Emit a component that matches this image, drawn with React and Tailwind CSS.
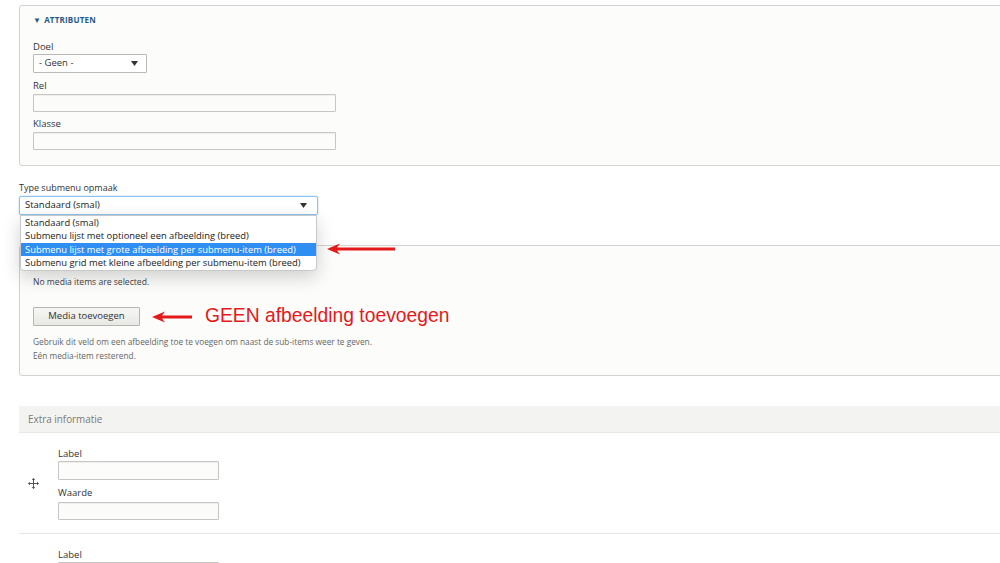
import React from 'react';

const options = [
  'Standaard (smal)',
  'Submenu lijst met optioneel een afbeelding (breed)',
  'Submenu lijst met grote afbeelding per submenu-item (breed)',
  'Submenu grid met kleine afbeelding per submenu-item (breed)',
];

const Caret = () => (
  <svg width="7" height="5" viewBox="0 0 7 5" className="shrink-0">
    <path d="M0 0h7L3.5 5z" fill="#333" />
  </svg>
);

const RedArrow = ({ width }) => (
  <svg width={width} height="12" viewBox={`0 0 ${width} 12`}>
    <path d={`M0 6 L13 0.5 L10 4.6 L${width} 4.6 L${width} 7.4 L10 7.4 L13 11.5 Z`} fill="#e3191b" />
  </svg>
);

const DragIcon = () => (
  <svg width="11" height="11" viewBox="0 0 11 11">
    <path d="M5.5 0.5v10M0.5 5.5h10" stroke="#555" strokeWidth="1" />
    <path d="M5.5 0 L3.7 2 H7.3 Z M5.5 11 L3.7 9 H7.3 Z M0 5.5 L2 3.7 V7.3 Z M11 5.5 L9 3.7 V7.3 Z" fill="#555" />
  </svg>
);

const Label = ({ children, className = '' }) => (
  <div className={`text-[9.5px] leading-[14px] text-[#333] ${className}`}>{children}</div>
);

const TextInput = ({ w, h = 'h-[18px]', className = '' }) => (
  <div className={`${w} ${h} border border-[#c6c6c2] bg-[#fcfcfa] rounded-[1px] shadow-[inset_0_1px_1px_rgba(0,0,0,0.06)] ${className}`} />
);

export default function App() {
  return (
    <div className="w-[1000px] h-[563px] overflow-hidden bg-white font-['Open_Sans',sans-serif]">
      <div className="pl-[19px] pt-[5px]">
        {/* Attributen */}
        <div className="w-[1000px] h-[161px] border border-[#d2d2cf] rounded-[3px] bg-[#fcfcfa] pl-[13px] pt-[8px]">
          <div className="flex items-center gap-[3px] h-[12px] text-[8px] font-bold tracking-[0.2px] text-[#275a87]">
            <span className="text-[8px]">▼</span>
            <span>ATTRIBUTEN</span>
          </div>
          <Label className="mt-[14px]">Doel</Label>
          <div className="w-[114px] h-[19px] border border-[#b9b9b6] rounded-[1px] bg-white flex items-center justify-between pl-[5px] pr-[8px] text-[9.5px] text-[#333]">
            <span>- Geen -</span>
            <Caret />
          </div>
          <Label className="mt-[6px]">Rel</Label>
          <TextInput w="w-[303px]" className="mt-[1px]" />
          <Label className="mt-[5px]">Klasse</Label>
          <TextInput w="w-[303px]" className="mt-[1px]" />
        </div>

        {/* Type submenu opmaak */}
        <Label className="mt-[15px] text-[9px]">Type submenu opmaak</Label>
        <div className="relative mt-[1px] w-[299px] z-10">
          <div className="h-[19px] border border-[#8cc4ee] rounded-[2px] bg-white flex items-center justify-between pl-[5px] pr-[10px] text-[9.5px] text-[#222] shadow-[0_0_2px_rgba(80,160,230,0.5)]">
            <span>Standaard (smal)</span>
            <Caret />
          </div>
          <div className="absolute left-[1px] top-[19px] w-[297px] bg-white border border-[#c8c8c8] rounded-b-[4px] shadow-[0_6px_18px_rgba(0,0,0,0.18)] pb-[1px]">
            {options.map((o, i) => (
              <div
                key={o}
                className={`h-[13.3px] leading-[13.3px] pl-[4px] text-[9.4px] whitespace-nowrap ${i === 2 ? 'bg-[#2f8ef2] text-white' : 'text-[#222]'}`}
              >
                {o}
              </div>
            ))}
          </div>
          <div className="absolute left-[308px] top-[47px]">
            <RedArrow width={68} />
          </div>
        </div>

        {/* Media */}
        <div className="mt-[30px] w-[1000px] h-[131px] border border-[#d2d2cf] rounded-[3px] bg-[#fcfcfa] pl-[13px] pt-[30px]">
          <div className="text-[8.6px] leading-[12px] text-[#444]">No media items are selected.</div>
          <div className="mt-[18px] flex items-center">
            <div className="w-[107px] h-[19px] border border-[#b4b4b0] rounded-[1px] bg-gradient-to-b from-[#f6f6f4] to-[#e8e8e5] flex items-center justify-center text-[9.5px] text-[#333]">
              Media toevoegen
            </div>
            <div className="ml-[12px] mt-[1px]">
              <RedArrow width={40} />
            </div>
            <div className="ml-[13px] text-[19.3px] leading-[20px] text-[#e3191b] font-['Liberation_Sans',Arial,sans-serif]">
              GEEN afbeelding toevoegen
            </div>
          </div>
          <div className="mt-[9px] text-[8.3px] leading-[14px] text-[#666]">
            <div>Gebruik dit veld om een afbeelding toe te voegen om naast de sub-items weer te geven.</div>
            <div>Eén media-item resterend.</div>
          </div>
        </div>

        {/* Extra informatie */}
        <div className="mt-[30px] w-[1000px] h-[27px] bg-[#f3f3f1] border-b border-[#e8e8e5] flex items-center pl-[9px] text-[9.9px] text-[#7a7a7a]">
          Extra informatie
        </div>
        <div className="w-[1000px] border-b border-[#e6e6e3] flex items-center pt-[14px] pb-[13px]">
          <div className="w-[39px] pl-[9px] flex">
            <DragIcon />
          </div>
          <div>
            <Label>Label</Label>
            <TextInput w="w-[161px]" h="h-[19px]" />
            <Label className="mt-[6px]">Waarde</Label>
            <TextInput w="w-[161px]" className="mt-[2px]" />
          </div>
        </div>
        <div className="pl-[39px] pt-[14px]">
          <Label>Label</Label>
          <TextInput w="w-[161px]" h="h-[19px]" />
        </div>
      </div>
    </div>
  );
}
